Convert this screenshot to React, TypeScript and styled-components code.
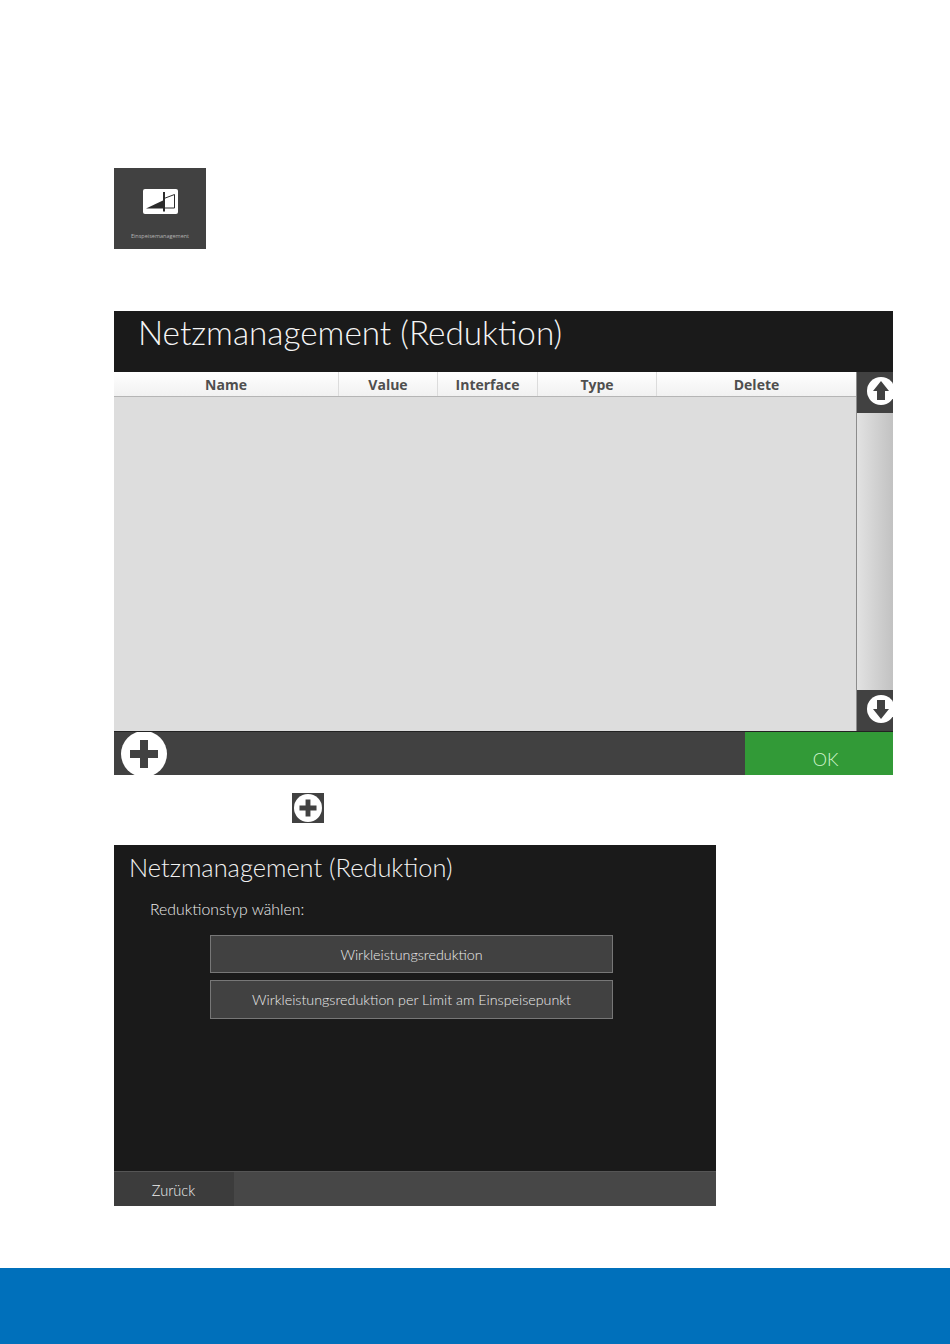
import React from 'react';
import styled, { createGlobalStyle } from 'styled-components';

const GlobalStyle = createGlobalStyle`
  html, body {
    margin: 0;
    padding: 0;
    background: #ffffff;
  }
`;

const Page = styled.div`
  width: 950px;
  height: 1344px;
  display: flex;
  flex-direction: column;
  font-family: 'Lato', 'Open Sans', sans-serif;
  overflow: hidden;
`;

const Content = styled.main`
  flex: 1;
  padding: 168px 57px 0 114px;
  display: flex;
  flex-direction: column;
  align-items: flex-start;
`;

const Tile = styled.div`
  width: 92px;
  height: 81px;
  background: #414141;
  display: flex;
  flex-direction: column;
  align-items: center;
  padding-top: 21px;
  box-sizing: border-box;
`;

const TileLabel = styled.span`
  margin-top: 18px;
  font-family: 'Open Sans', sans-serif;
  font-size: 5.5px;
  line-height: 8px;
  color: #b4b4b4;
  white-space: nowrap;
`;

const MainPanel = styled.section`
  margin-top: 62px;
  width: 779px;
  height: 464px;
  display: flex;
  flex-direction: column;
  background: #dddddd;
  overflow: hidden;
`;

const TitleBar = styled.header`
  height: 61px;
  flex: none;
  background: #1a1a1a;
  color: #f5f5f5;
  font-size: 33.3px;
  font-weight: 300;
  line-height: 43px;
  padding-left: 24px;
  box-sizing: border-box;
`;

const TableArea = styled.div`
  flex: 1;
  display: flex;
  min-height: 0;
`;

const TableColumn = styled.div`
  flex: 1;
  display: flex;
  flex-direction: column;
`;

const HeaderRow = styled.div`
  display: grid;
  grid-template-columns: 225px 99px 100px 119px 199px;
  height: 25px;
  box-sizing: border-box;
  background: linear-gradient(#ffffff, #f1f1f1);
  border-bottom: 1px solid #b5b5b5;
`;

const HeaderCell = styled.div`
  display: flex;
  align-items: center;
  justify-content: center;
  font-family: 'Open Sans', sans-serif;
  font-size: 14px;
  font-weight: 700;
  color: #4f4f4f;
  border-right: 1px solid #dcdcdc;

  &:last-child {
    border-right: none;
  }
`;

const Scroller = styled.div`
  width: 37px;
  flex: none;
  display: flex;
  flex-direction: column;
  border-left: 1px solid #8c8c8c;
  box-sizing: border-box;
`;

const ScrollButton = styled.div`
  height: 41px;
  flex: none;
  background: #414141;
  overflow: hidden;
  display: flex;
  align-items: center;
  padding: 0 0 3px 10px;
  box-sizing: border-box;
`;

const ScrollTrack = styled.div`
  flex: 1;
  background: linear-gradient(90deg, #e2e2e2, #c2c2c2);
`;

const Footer = styled.footer`
  height: 44px;
  flex: none;
  display: flex;
  background: #414141;
  border-top: 1px solid #222222;
  box-sizing: border-box;
`;

const AddSlot = styled.div`
  flex: 1;
  height: 43px;
  padding: 1px 0 0 7px;
  display: flex;
  align-items: center;
  box-sizing: border-box;
  overflow: hidden;
`;

const OkButton = styled.div`
  width: 148px;
  background: #329a37;
  color: #d2f5ce;
  font-size: 18px;
  font-weight: 300;
  display: flex;
  justify-content: center;
  align-items: flex-end;
  padding: 0 0 5px 13px;
  box-sizing: border-box;
`;

const InlineAdd = styled.div`
  margin: 18px 0 0 178px;
  width: 32px;
  height: 30px;
  background: #414141;
  display: flex;
  align-items: center;
  justify-content: center;
`;

const DialogPanel = styled.section`
  margin-top: 22px;
  width: 602px;
  height: 361px;
  background: #1a1a1a;
  display: flex;
  flex-direction: column;
`;

const DialogTitle = styled.h2`
  margin: 0;
  padding: 6px 0 0 15px;
  font-size: 25.4px;
  font-weight: 300;
  line-height: 33px;
  color: #f2f2f2;
`;

const DialogPrompt = styled.p`
  margin: 0;
  padding: 14px 0 0 36px;
  font-size: 15.8px;
  font-weight: 300;
  line-height: 22px;
  color: #ececec;
`;

const OptionList = styled.div`
  margin: 15px 0 0 96px;
  width: 403px;
  display: flex;
  flex-direction: column;
  gap: 7px;
`;

const OptionButton = styled.div<{ $height: number }>`
  height: ${(p) => p.$height}px;
  box-sizing: border-box;
  background: #414141;
  border: 1px solid #777777;
  color: #ececec;
  font-size: 14.3px;
  font-weight: 300;
  display: flex;
  align-items: center;
  justify-content: center;
`;

const DialogFooter = styled.footer`
  margin-top: auto;
  height: 35px;
  display: flex;
  background: #474747;
  border-top: 1px solid #555555;
  box-sizing: border-box;
`;

const BackButton = styled.div`
  width: 120px;
  background: #3c3c3c;
  color: #f0f0f0;
  font-size: 14.6px;
  font-weight: 300;
  display: flex;
  align-items: flex-end;
  justify-content: center;
  padding: 0 1px 7px 0;
  box-sizing: border-box;
`;

const BlueBand = styled.div`
  height: 76px;
  flex: none;
  background: #0070bb;
`;

const ReductionIcon = () => (
  <svg width="35" height="25" viewBox="0 0 35 25">
    <rect width="35" height="25" rx="2" fill="#ffffff" />
    <path d="M3 19.5 L21 11 V19.5 Z" fill="#2b2b2b" />
    <path d="M21 9.5 L31.5 5.5 V19 H21" fill="none" stroke="#2b2b2b" strokeWidth="1" />
    <rect x="20" y="3" width="2" height="19.5" fill="#2b2b2b" />
  </svg>
);

const PlusCircle = ({ size }: { size: number }) => (
  <svg width={size} height={size} viewBox="0 0 46 46" style={{ flex: 'none' }}>
    <circle cx="23" cy="23" r="23" fill="#ffffff" />
    <path d="M19 9 H27 V19 H37 V27 H27 V37 H19 V27 H9 V19 H19 Z" fill="#414141" />
  </svg>
);

const ArrowCircle = ({ down }: { down?: boolean }) => (
  <svg width="28" height="28" viewBox="0 0 28 28" style={{ flex: 'none' }}>
    <circle cx="14" cy="14" r="14" fill="#ffffff" />
    <path
      d={down ? 'M10 5 H18 V14 H22 L14 24 L6 14 H10 Z' : 'M10 23 H18 V14 H22 L14 4 L6 14 H10 Z'}
      fill="#414141"
    />
  </svg>
);

const columns = ['Name', 'Value', 'Interface', 'Type', 'Delete'];

const App: React.FC = () => (
  <Page>
    <GlobalStyle />
    <Content>
      <Tile>
        <ReductionIcon />
        <TileLabel>Einspeisemanagement</TileLabel>
      </Tile>

      <MainPanel>
        <TitleBar>Netzmanagement (Reduktion)</TitleBar>
        <TableArea>
          <TableColumn>
            <HeaderRow>
              {columns.map((c) => (
                <HeaderCell key={c}>{c}</HeaderCell>
              ))}
            </HeaderRow>
          </TableColumn>
          <Scroller>
            <ScrollButton>
              <ArrowCircle />
            </ScrollButton>
            <ScrollTrack />
            <ScrollButton>
              <ArrowCircle down />
            </ScrollButton>
          </Scroller>
        </TableArea>
        <Footer>
          <AddSlot>
            <PlusCircle size={46} />
          </AddSlot>
          <OkButton>OK</OkButton>
        </Footer>
      </MainPanel>

      <InlineAdd>
        <PlusCircle size={28} />
      </InlineAdd>

      <DialogPanel>
        <DialogTitle>Netzmanagement (Reduktion)</DialogTitle>
        <DialogPrompt>Reduktionstyp wählen:</DialogPrompt>
        <OptionList>
          <OptionButton $height={38}>Wirkleistungsreduktion</OptionButton>
          <OptionButton $height={39}>Wirkleistungsreduktion per Limit am Einspeisepunkt</OptionButton>
        </OptionList>
        <DialogFooter>
          <BackButton>Zurück</BackButton>
        </DialogFooter>
      </DialogPanel>
    </Content>
    <BlueBand />
  </Page>
);

export default App;
